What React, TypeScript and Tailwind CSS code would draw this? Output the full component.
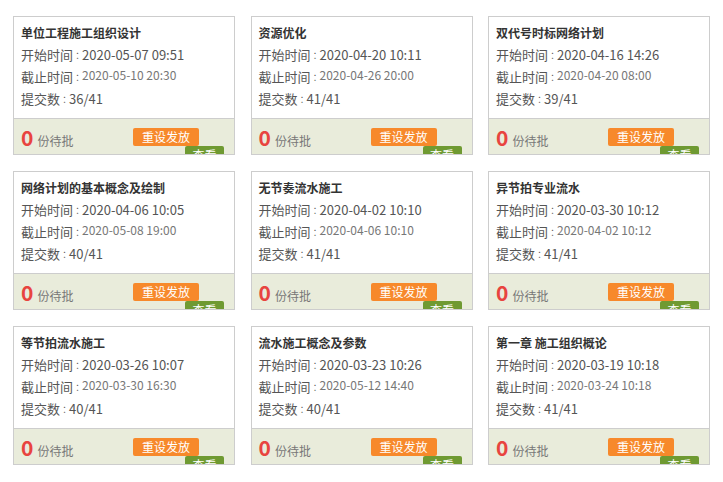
import React from "react";

type Item = { title: string; start: string; end: string; count: string };

const items: Item[] = [
  { title: "单位工程施工组织设计", start: "2020-05-07 09:51", end: "2020-05-10 20:30", count: "36/41" },
  { title: "资源优化", start: "2020-04-20 10:11", end: "2020-04-26 20:00", count: "41/41" },
  { title: "双代号时标网络计划", start: "2020-04-16 14:26", end: "2020-04-20 08:00", count: "39/41" },
  { title: "网络计划的基本概念及绘制", start: "2020-04-06 10:05", end: "2020-05-08 19:00", count: "40/41" },
  { title: "无节奏流水施工", start: "2020-04-02 10:10", end: "2020-04-06 10:10", count: "41/41" },
  { title: "异节拍专业流水", start: "2020-03-30 10:12", end: "2020-04-02 10:12", count: "41/41" },
  { title: "等节拍流水施工", start: "2020-03-26 10:07", end: "2020-03-30 16:30", count: "40/41" },
  { title: "流水施工概念及参数", start: "2020-03-23 10:26", end: "2020-05-12 14:40", count: "40/41" },
  { title: "第一章 施工组织概论", start: "2020-03-19 10:18", end: "2020-03-24 10:18", count: "41/41" },
];

function Colon() {
  return (
    <span
      className="relative top-[-1.5px] text-[9px] leading-none"
      style={{ fontFamily: '"Noto Sans CJK JP", "Noto Sans CJK SC", sans-serif' }}
    >
      ：
    </span>
  );
}

function Card({ item }: { item: Item }) {
  return (
    <div className="flex h-[139px] flex-col overflow-hidden border border-[#cdcdcd] bg-white">
      <div className="h-[101px] px-[7px] pt-[5px] text-[13px] leading-[22px] text-[#555]">
        <div className="h-[22px] text-[12px] font-bold text-[#333]">{item.title}</div>
        <div className="h-[22px]">
          开始时间<Colon />
          <span className="text-[13px] text-[#555]">{item.start}</span>
        </div>
        <div className="h-[22px]">
          截止时间<Colon />
          <span className="relative top-[-2px] text-[12px] text-[#777]">{item.end}</span>
        </div>
        <div className="h-[22px]">
          提交数<Colon />
          {item.count}
        </div>
      </div>
      <div className="flex h-[36px] overflow-hidden border-t border-[#cdcdcd] bg-[#e9ecdb] pl-[7px] pr-[10px]">
        <div className="flex items-baseline pt-[5px]">
          <span className="text-[21px] font-bold leading-[26px] text-[#e8443f]">0</span>
          <span className="ml-[4px] text-[12px] text-[#777]">份待批</span>
        </div>
        <div className="ml-auto flex flex-col items-end pt-[9px]">
          <div className="mr-[25px] flex h-[18px] w-[66px] items-center justify-center rounded-[2px] bg-[#f7892b] text-[12px] leading-[18px] text-white">
            重设发放
          </div>
          <div className="flex h-[18px] w-[39px] shrink-0 items-center justify-center rounded-[2px] bg-[#6f9a32] text-[12px] leading-[18px] text-white">
            查看
          </div>
        </div>
      </div>
    </div>
  );
}

export default function App() {
  return (
    <div
      className="h-[482px] w-[723px] overflow-hidden bg-white"
      style={{ fontFamily: '"Microsoft YaHei", "Noto Sans CJK SC", "Noto Sans", sans-serif' }}
    >
      <div className="grid grid-cols-[222px_222px_222px] gap-x-[15.5px] gap-y-[16px] pl-[13px] pt-[16px]">
        {items.map((it) => (
          <Card key={it.title} item={it} />
        ))}
      </div>
    </div>
  );
}
